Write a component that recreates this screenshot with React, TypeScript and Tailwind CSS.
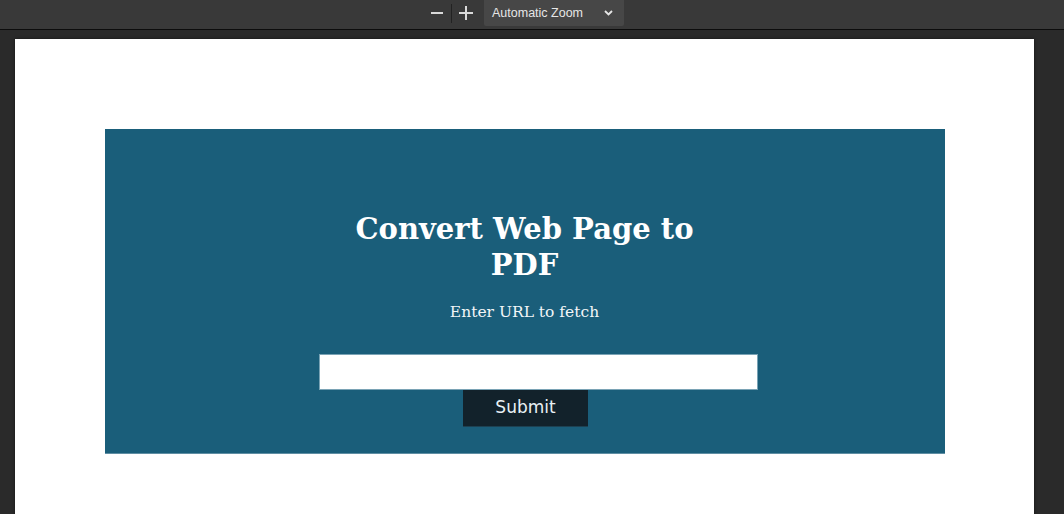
export default function App() {
  return (
    <div className="flex h-[514px] w-[1064px] flex-col overflow-hidden bg-[#2a2a2a] font-['DejaVu_Sans',sans-serif]">
      {/* toolbar */}
      <div className="flex h-[30px] shrink-0 items-start justify-center border-b border-[#0c0c0c] bg-[#393939] pr-[14px]">
        <div className="flex h-[26px] items-center">
          <button type="button" className="flex h-[26px] w-[22px] items-center justify-center">
            <span className="block h-[2px] w-[12px] bg-[#d9d9d9]" />
          </button>
          <span className="mx-[3px] block h-[19px] w-px bg-[#222222]" />
          <button type="button" className="relative flex h-[26px] w-[22px] items-center justify-center">
            <span className="block h-[2px] w-[14px] bg-[#d9d9d9]" />
            <span className="absolute block h-[14px] w-[2px] bg-[#d9d9d9]" />
          </button>
          <div className="ml-[7px] flex h-[26px] w-[140px] items-center justify-between rounded-b-[2px] bg-[#474747] pl-[8px] pr-[11px] font-['Liberation_Sans',sans-serif] text-[12.5px] text-[#e6e6e6]">
            <span>Automatic Zoom</span>
            <svg width="9" height="6" viewBox="0 0 9 6" fill="none">
              <path d="M1 1l3.5 3.5L8 1" stroke="#e6e6e6" strokeWidth="1.8" />
            </svg>
          </div>
        </div>
      </div>

      {/* viewer */}
      <div className="flex-1 pl-[15px] pr-[30px] pt-[9px]">
        <div className="h-[600px] bg-white pt-[90px] shadow-[0_0_3px_rgba(0,0,0,0.5)]">
          <div className="mx-auto flex h-[325px] w-[840px] flex-col items-center border-b border-[#5f8ea3] bg-[#1a5e7a] pt-[82px] text-white">
            <h1 className="w-[370px] text-center font-['DejaVu_Serif',serif] text-[29px] font-bold leading-[36px]">
              Convert Web Page to PDF
            </h1>
            <p className="mt-[19px] font-['DejaVu_Serif',serif] text-[15.5px] leading-[20px] text-[#f2f6f8]">
              Enter URL to fetch
            </p>
            <input
              type="text"
              className="ml-[27px] mt-[32px] h-[36px] w-[439px] border border-[#7aa3b5] bg-white px-2 text-black outline-none"
            />
            <button
              type="button"
              className="ml-[2px] h-[37px] w-[125px] border-b border-[#1d4152] bg-[#12222b] text-[17px] text-[#e8f1f5]"
            >
              Submit
            </button>
          </div>
        </div>
      </div>
    </div>
  )
}
